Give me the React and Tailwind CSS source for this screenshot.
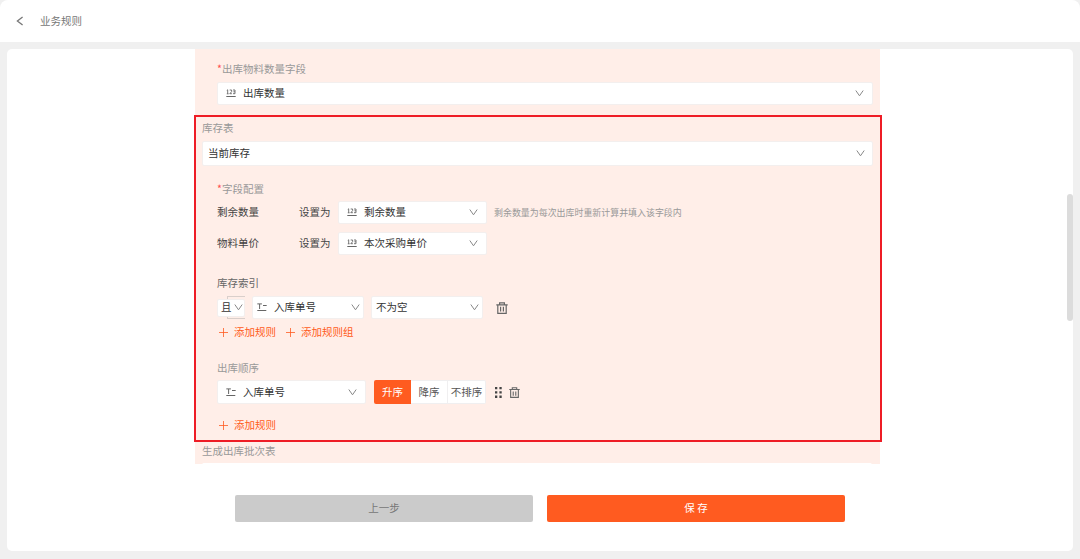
import clsx from 'clsx';

const ICON_COLOR = 'text-[#666]';

const ChevronDown = ({ className }) => (
  <svg className={clsx('shrink-0', className)} width="9" height="9" viewBox="0 0 9 9" fill="none" stroke="currentColor">
    <path d="M0.8 1.5 4.5 6.8 8.2 1.5" />
  </svg>
);

const ChevronLeft = () => (
  <svg className="text-[#777]" width="8" height="10" viewBox="0 0 8 10" fill="none" stroke="currentColor" strokeWidth="1.3">
    <path d="M6.6 1 1.4 5 6.6 9" />
  </svg>
);

// "123" over a line, numeric field
const NumberIcon = () => (
  <svg className={clsx('shrink-0', ICON_COLOR)} width="10" height="9" viewBox="0 0 10 9" fill="none" stroke="currentColor">
    <path strokeWidth="0.9" d="M0.8 1.4 1.7 0.8V4.8M0.8 4.8H2.6M3.7 1H5.6V2.7L3.8 4.7H5.9M7 1H9V4.7H7M7.4 2.8H9" />
    <path d="M0.3 7.5H9.7" strokeWidth="1" />
  </svg>
);

// T with a dash over a line, text field
const TextIcon = () => (
  <svg className={clsx('shrink-0', ICON_COLOR)} width="10" height="9" viewBox="0 0 10 9" fill="none" stroke="currentColor">
    <path d="M0.3 0.9H4.9M2.6 1V6M6 2.5H9.7M0.3 7.5H9.3" />
  </svg>
);

const PlusIcon = () => (
  <svg width="9" height="9" viewBox="0 0 9 9" fill="none" stroke="currentColor" strokeWidth="0.8">
    <path d="M4.5 0V9M0 4.5H9" />
  </svg>
);

const TrashIcon = ({ className }) => (
  <svg className={className} viewBox="0 0 12 12" fill="none" stroke="currentColor" strokeWidth="1.2">
    <path d="M0.3 2.8H11.7M3.6 2.6V0.8H8.4V2.6M1.8 3V11.3H10.2V3M4.6 4.8V9.6M7.4 4.8V9.6" />
  </svg>
);

const DragIcon = () => (
  <svg className="text-[#444]" width="7" height="11" viewBox="0 0 7 11" fill="currentColor">
    <path d="M0 0H2.3V2.3H0ZM4.4 0H6.7V2.3H4.4ZM0 4.3H2.3V6.6H0ZM4.4 4.3H6.7V6.6H4.4ZM0 8.6H2.3V10.9H0ZM4.4 8.6H6.7V10.9H4.4Z" />
  </svg>
);

const Select = ({ icon, label, className }) => (
  <div className={clsx('flex items-center justify-between rounded-[2px] border border-[#f3efee] bg-white text-[#333]', className)}>
    <div className="flex items-center gap-[7px]">
      {icon}
      <span className="pb-px">{label}</span>
    </div>
    <ChevronDown className="text-[#888]" />
  </div>
);

const Label = ({ required, children }) => (
  <p className="h-4 text-[#999]">
    {required && <span className="text-[#ff4d4f]">*</span>}
    {children}
  </p>
);

const AddButton = ({ children }) => (
  <button className="flex h-4 items-center gap-[6px] text-[#ff5b20]">
    <PlusIcon />
    {children}
  </button>
);

const FIELDS = [
  { name: '剩余数量', target: '剩余数量', tip: '剩余数量为每次出库时重新计算并填入该字段内' },
  { name: '物料单价', target: '本次采购单价' },
];

const FieldRow = ({ name, target, tip }) => (
  <div className="flex h-[23px] items-center text-[#444]">
    <span className="w-[82px] pb-px">{name}</span>
    <span className="w-[39px] pb-px">设置为</span>
    <Select className="h-[23px] w-[149px] pr-2 pl-2" icon={<NumberIcon />} label={target} />
    {tip && <span className="ml-[7px] text-[8.95px] text-[#999]">{tip}</span>}
  </div>
);

const StockIndex = () => (
  <div className="mt-[20px]">
    <p className="h-4 text-[#666]">库存索引</p>
    <div className="mt-[5px] flex h-[23px] items-center">
      {/* and/or switch with its bracket */}
      <div className="relative flex h-[23px] w-7 items-center">
        <div className="absolute top-0 right-0 h-[23px] w-[18px] border-y border-l border-[#d9cfcb]" />
        <Select className="relative h-[18px] w-7 pr-px pl-[3px]" label="且" />
      </div>
      <Select className="ml-[7px] h-[23px] w-[112px] pr-[3px] pl-1" icon={<TextIcon />} label="入库单号" />
      <Select className="ml-[7px] h-[23px] w-[112px] pr-[3px] pl-1" label="不为空" />
      <TrashIcon className="ml-[13px] size-3 text-[#666]" />
    </div>
    <div className="mt-[5px] flex gap-[10px] pl-[2px]">
      <AddButton>添加规则</AddButton>
      <AddButton>添加规则组</AddButton>
    </div>
  </div>
);

const OutOrder = () => (
  <div className="mt-5">
    <Label>出库顺序</Label>
    <div className="mt-1 flex h-6 items-center">
      <Select className="h-6 w-[149px] pr-2 pl-2" icon={<TextIcon />} label="入库单号" />
      <div className="ml-2 flex h-6 rounded-[2px] text-[#555]">
        <span className="flex w-[37px] items-center justify-center rounded-l-[2px] bg-[#ff5b20] text-white">升序</span>
        <span className="flex w-[37px] items-center justify-center border-y border-r border-[#f0eff0] bg-white">降序</span>
        <span className="flex w-[38px] items-center justify-center rounded-r-[2px] border-y border-r border-[#f0eff0] bg-white">不排序</span>
      </div>
      <div className="ml-[9px] flex items-center gap-[7px]">
        <DragIcon />
        <TrashIcon className="size-[11px] text-[#666]" />
      </div>
    </div>
    <div className="mt-[13px] flex pl-[2px]">
      <AddButton>添加规则</AddButton>
    </div>
  </div>
);

const App = () => {
  return (
    <div className="flex h-[559px] w-[1080px] flex-col overflow-hidden bg-[#f0f0f0] font-['Noto_Sans_CJK_SC',sans-serif] text-[10.5px] leading-4 whitespace-nowrap">
      <header className="flex h-[42px] shrink-0 items-center gap-4 rounded-t-lg bg-white pl-4 text-[#777]">
        <ChevronLeft />
        <span>业务规则</span>
      </header>

      <main className="mx-[7px] mt-[7px] flex h-[502px] justify-between rounded-[5px] bg-white">
        <div className="ml-[187px] w-[688px]">
          <div className="flex h-[415px] flex-col overflow-hidden">
            <div className="mr-[2px] ml-px h-[66px] shrink-0 bg-[#ffeee8] pt-[12px] pl-[22px]">
              <Label required>出库物料数量字段</Label>
              <Select className="mt-[5px] h-[23px] w-[656px] pr-2 pl-2" icon={<NumberIcon />} label="出库数量" />
            </div>

            <section className="h-[327px] shrink-0 border-2 border-[#ee1c25] bg-[#ffeee8] pt-[3px] pl-[6px]">
              <Label>库存表</Label>
              <Select className="mt-[5px] h-[25px] w-[671px] pr-[7px] pl-[5px]" label="当前库存" />
              <div className="pt-[15px] pl-[15px]">
                <Label required>字段配置</Label>
                <div className="mt-1 flex flex-col gap-2">
                  {FIELDS.map((field) => (
                    <FieldRow key={field.name} {...field} />
                  ))}
                </div>
                <StockIndex />
                <OutOrder />
              </div>
            </section>

            <div className="mr-[2px] ml-px h-[23px] shrink-0 bg-[#ffeee8] pt-px pl-[7px]">
              <Label>生成出库批次表</Label>
              <div className="mt-1 h-6 w-[670px] rounded-[2px] bg-white" />
            </div>
          </div>

          <div className="mt-[31px] ml-[41px] flex gap-[14px]">
            <button className="h-[27px] w-[298px] rounded-[2px] bg-[#cbcbcb] pb-px text-[#777]">上一步</button>
            <button className="h-[27px] w-[298px] rounded-[2px] bg-[#ff5b20] pb-px text-white">保 存</button>
          </div>
        </div>

        {/* scroll thumb */}
        <div className="mt-[145px] h-[127px] w-[6px] rounded-full bg-[#dcdcdc]" />
      </main>
    </div>
  );
};

export default App;
